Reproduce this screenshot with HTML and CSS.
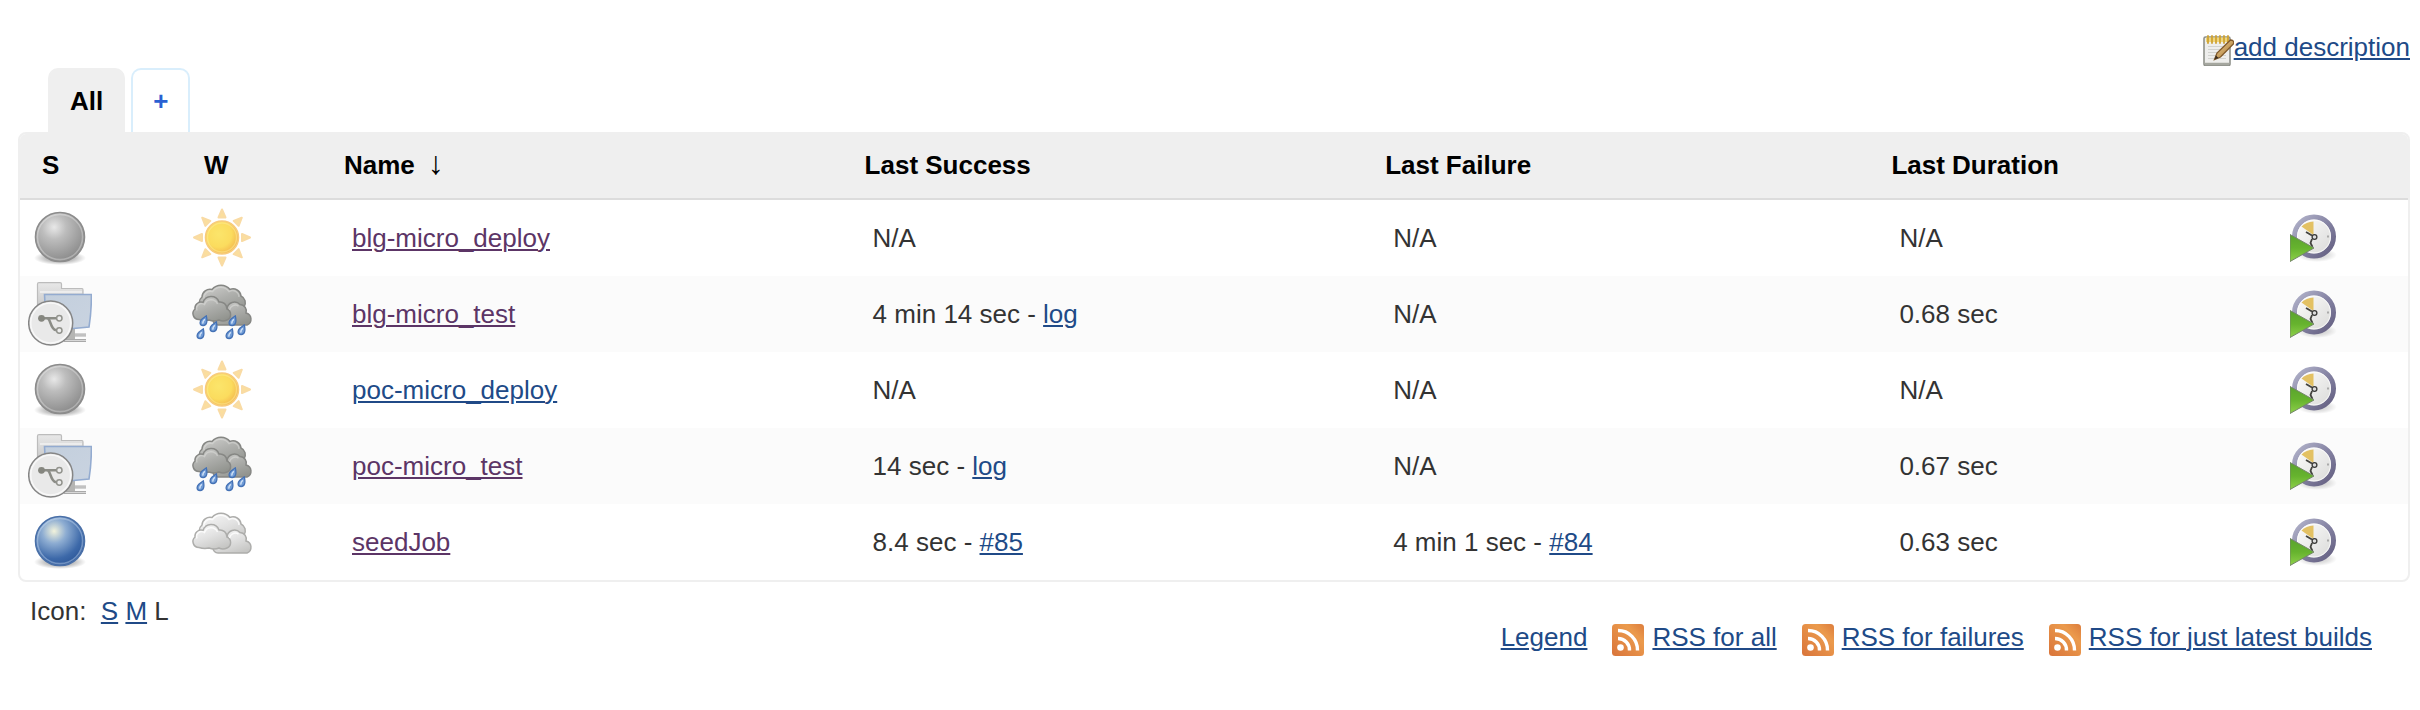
FILE: index.html
```html
<!DOCTYPE html>
<html lang="en">
<head>
<meta charset="utf-8">
<title>Dashboard</title>
<link rel="stylesheet" href="styles.css">
</head>
<body>
<svg class="sprite" aria-hidden="true">
  <defs>
    <radialGradient id="g-grey" cx=".38" cy=".3" r=".7"><stop offset="0" stop-color="#e8e8e8"/><stop offset=".35" stop-color="#bdbdbd"/><stop offset="1" stop-color="#8c8c8c"/></radialGradient>
    <radialGradient id="g-blue" cx=".38" cy=".3" r=".7"><stop offset="0" stop-color="#f2f3dc"/><stop offset=".35" stop-color="#8eadd2"/><stop offset=".8" stop-color="#3d69a9"/><stop offset="1" stop-color="#2f5a9c"/></radialGradient>
    <radialGradient id="g-shadow"><stop offset="0" stop-color="#000" stop-opacity=".45"/><stop offset=".6" stop-color="#000" stop-opacity=".22"/><stop offset="1" stop-color="#000" stop-opacity="0"/></radialGradient>
    <radialGradient id="g-sun" cx=".4" cy=".4" r=".65"><stop offset="0" stop-color="#fbe56b"/><stop offset=".6" stop-color="#fbdc5e"/><stop offset="1" stop-color="#f3b44c"/></radialGradient>
    <linearGradient id="g-storm" x1=".1" y1="0" x2=".7" y2="1"><stop offset="0" stop-color="#cfcfcd"/><stop offset=".5" stop-color="#adaeab"/><stop offset="1" stop-color="#92948f"/></linearGradient>
    <linearGradient id="g-cloud" x1=".1" y1="0" x2=".7" y2="1"><stop offset="0" stop-color="#f8f8f8"/><stop offset=".5" stop-color="#e2e2e2"/><stop offset="1" stop-color="#c6c6c4"/></linearGradient>
    <linearGradient id="g-folder" x1="0" y1="0" x2="0" y2="1"><stop offset="0" stop-color="#e8e8e8"/><stop offset="1" stop-color="#b4b4b4"/></linearGradient>
    <linearGradient id="g-front" x1="0" y1="0" x2="1" y2="1"><stop offset="0" stop-color="#c3cfdd"/><stop offset="1" stop-color="#c9d3e0"/></linearGradient>
    <linearGradient id="g-ring" x1="0" y1="0" x2="1" y2="1"><stop offset="0" stop-color="#b4b5cc"/><stop offset=".5" stop-color="#8583a3"/><stop offset="1" stop-color="#625d7f"/></linearGradient>
    <linearGradient id="g-play" x1="0" y1="0" x2="0" y2="1"><stop offset="0" stop-color="#5aa22e"/><stop offset=".5" stop-color="#66b32e"/><stop offset="1" stop-color="#8ed04a"/></linearGradient>
    <linearGradient id="g-rss" x1="0" y1="1" x2="1" y2="0"><stop offset="0" stop-color="#d9743a"/><stop offset=".7" stop-color="#eb9a4c"/><stop offset="1" stop-color="#dc7c3c"/></linearGradient>
    <linearGradient id="g-face" x1="0" y1="0" x2="1" y2="1"><stop offset="0" stop-color="#fff"/><stop offset="1" stop-color="#d8d8d6"/></linearGradient>
    <linearGradient id="g-pencil" x1="0" y1="0" x2="1" y2="1"><stop offset="0" stop-color="#edcf96"/><stop offset="1" stop-color="#a8762f"/></linearGradient>
  </defs>

  <symbol id="ball-grey" viewBox="0 0 64 64">
    <ellipse cx="32" cy="52" rx="26" ry="7" fill="url(#g-shadow)"/>
    <circle cx="32" cy="31" r="24.5" fill="url(#g-grey)" stroke="#8c8c8c" stroke-width="1.6"/>
    <circle cx="32" cy="31" r="22.6" fill="none" stroke="#fff" stroke-opacity=".3" stroke-width="1.6"/>
  </symbol>
  <symbol id="ball-blue" viewBox="0 0 64 64">
    <ellipse cx="32" cy="52" rx="26" ry="7" fill="url(#g-shadow)"/>
    <circle cx="32" cy="31" r="24.5" fill="url(#g-blue)" stroke="#4a70a8" stroke-width="1.6"/>
    <circle cx="32" cy="31" r="22.6" fill="none" stroke="#cfe0f5" stroke-opacity=".4" stroke-width="1.6"/>
  </symbol>

  <symbol id="sunny" viewBox="0 0 64 64">
    <g fill="#fbdf9c" stroke="#f9dba4" stroke-width="2" stroke-linejoin="round">
      <path id="ray" d="M28.500 11.500 32 3.500l3.500 8Z"/>
      <use href="#ray" transform="rotate(45 32 31.500)"/>
      <use href="#ray" transform="rotate(90 32 31.500)"/>
      <use href="#ray" transform="rotate(135 32 31.500)"/>
      <use href="#ray" transform="rotate(180 32 31.500)"/>
      <use href="#ray" transform="rotate(225 32 31.500)"/>
      <use href="#ray" transform="rotate(270 32 31.500)"/>
      <use href="#ray" transform="rotate(315 32 31.500)"/>
    </g>
    <circle cx="32" cy="31.500" r="16.500" fill="url(#g-sun)" stroke="#f7cb7c" stroke-width="1.600"/>
    <circle cx="32" cy="31.500" r="14.500" fill="none" stroke="#fdeb98" stroke-opacity=".5" stroke-width="1.400"/>
  </symbol>

  <symbol id="cloud-shapes" viewBox="0 0 64 64">
    <path d="M12 26A7 7 0 0 1 12 15 8 8 0 0 1 22 7.500 11.500 11.500 0 0 1 40 7.500 8 8 0 0 1 51 14 7.500 7.500 0 0 1 54 25L50 34H16Z"/>
    <path d="M28 43A5 5 0 0 1 28 33 6 6 0 0 1 37 27 7.500 7.500 0 0 1 50 22.500 6.500 6.500 0 0 1 56 31 6.300 6.300 0 0 1 57 43Z"/>
    <path d="M9 37.500A6 6 0 0 1 5 27 6 6 0 0 1 13 20.500 8.500 8.500 0 0 1 29 20 7 7 0 0 1 37 27 6 6 0 0 1 37 38Q33 40 29 38 24 40 19 38 14 39 9 37.500Z"/>
  </symbol>
  <symbol id="cloud-lights" viewBox="0 0 64 64">
    <path d="M14 16.500A6.500 6.500 0 0 1 22.500 9.500 10 10 0 0 1 39 9.500 6.500 6.500 0 0 1 49 15M7 28.500A5 5 0 0 1 14.500 22.500 7 7 0 0 1 27.500 22M39.500 28A6 6 0 0 1 48.500 24"/>
  </symbol>
  <symbol id="cloudy" viewBox="0 0 64 64">
    <g fill="url(#g-cloud)" stroke="#adadab" stroke-width="1.500"><use href="#cloud-shapes" width="64" height="64"/></g>
    <g fill="none" stroke="#fff" stroke-opacity=".8" stroke-width="1.500"><use href="#cloud-lights" width="64" height="64"/></g>
  </symbol>
  <symbol id="drop" viewBox="0 0 10 14">
    <path d="M8.300 1C9.500 6 9.500 12.500 4.500 12.500 0 12.500 .300 7.500 3 5Z" fill="#6f9bd6" stroke="#4471b5" stroke-width="1.500"/>
    <path d="M6.500 5C5 6.500 3.500 8 4.500 10" fill="none" stroke="#d3e3f7" stroke-width="1.600"/>
  </symbol>
  <symbol id="rainy" viewBox="0 0 64 64">
    <g fill="url(#g-storm)" stroke="#868784" stroke-width="1.500"><use href="#cloud-shapes" width="64" height="64"/></g>
    <g fill="none" stroke="#e8e8e6" stroke-opacity=".4" stroke-width="1.500"><use href="#cloud-lights" width="64" height="64"/></g>
    <use href="#drop" x="9" y="33" width="9" height="12"/>
    <use href="#drop" x="19" y="39" width="9" height="12"/>
    <use href="#drop" x="6" y="46" width="9" height="12"/>
    <use href="#drop" x="38" y="33" width="9" height="12"/>
    <use href="#drop" x="47" y="42" width="9" height="12"/>
    <use href="#drop" x="35" y="46" width="9" height="12"/>
  </symbol>

  <symbol id="pipeline" viewBox="0 0 64 64">
    <path d="M36 53H58M36 58.500H58" stroke="#a9a9a9" stroke-width="3"/>
    <path d="M36 53H58M36 58.500H58" stroke="#d8d8d8" stroke-width="1"/>
    <path d="M39 46h8v11h-8z" fill="#b5b5b3"/>
    <path d="M9.500 42V2Q9.500 .700 11 .700H32Q33.500 .700 33.500 2V6.500H54Q55 6.500 55 8V42Z" fill="url(#g-folder)" stroke="#bcbcbc" stroke-width="1.200"/>
    <path d="M12 10H54" stroke="#f2f2f2" stroke-width="1.500"/>
    <path d="M16.500 12.500H63.400C63.400 24 62.500 36 61 45L40 47 18 40Z" fill="url(#g-front)" stroke="#93abd0" stroke-width="1.600"/>
    <circle cx="22.700" cy="41" r="22" fill="#e9e9e9" stroke="#858585" stroke-width="1.500"/>
    <circle cx="22.700" cy="41" r="20" fill="none" stroke="#f8f8f8" stroke-width="1.500"/>
    <path d="M14 36.300H28M19 36.300C23 36.300 22 47 28 48.300" fill="none" stroke="#8b8c86" stroke-width="2.600"/>
    <circle cx="13.500" cy="36.300" r="3.400" fill="#85867f"/>
    <circle cx="31.300" cy="36.300" r="2.700" fill="#eee" stroke="#92938d" stroke-width="1.500"/>
    <circle cx="31.300" cy="48.500" r="2.700" fill="#eee" stroke="#92938d" stroke-width="1.500"/>
  </symbol>

  <symbol id="clock" viewBox="0 0 48 48">
    <ellipse cx="27" cy="41" rx="20" ry="7" fill="url(#g-shadow)" opacity=".5"/>
    <circle cx="24" cy="22.500" r="19.500" fill="url(#g-face)" stroke="url(#g-ring)" stroke-width="5"/>
    <circle cx="24" cy="22.500" r="16.500" fill="none" stroke="#fff" stroke-opacity=".8" stroke-width="1"/>
    <path d="M11.500 12.500Q16 8 23.500 7.500V21Z" fill="#e3c163"/>
    <path d="M16 18 22 21.500M22 25 20.500 29 22.500 33" fill="none" stroke="#44443f" stroke-width="1.800"/>
    <circle cx="24.500" cy="23" r="2.400" fill="#ddd" stroke="#3a3a38" stroke-width="1.300"/>
    <path d="M37 22.500H39" stroke="#aaa" stroke-width="2"/>
    <path d="M0 20.500 24 34 0 47.500Z" fill="url(#g-play)" stroke="#74866a" stroke-width="1"/>
  </symbol>

  <symbol id="notepad" viewBox="0 0 32 32">
    <rect x="2" y="3" width="26" height="28.500" rx="1.500" fill="#eeeeec" stroke="#8f918a" stroke-width="1.600"/>
    <path d="M3 30H27" stroke="#a5a79f" stroke-width="2.500"/>
    <path d="M6 12.500H24M6 15.500H24M6 18.500H24M6 21.500H24M6 24.500H24" stroke="#d2d3cf" stroke-width="1"/>
    <path d="M4 3.500H27V8H4Z" fill="#efd67c"/>
    <path d="M6 2V9M10 2V9M14 2V9M18 2V9M22 2V9M26 2V9" stroke="#cfa332" stroke-width="1.800" stroke-linecap="round"/>
    <path d="M12.500 25.500 15 19 28.500 6Q32 6 31.800 9.500L18.500 23Z" fill="url(#g-pencil)" stroke="#80592a" stroke-width="1.300"/>
    <path d="M12.500 25.500 14 21.500 16.500 24Z" fill="#3b2e20"/>
  </symbol>

  <symbol id="rss" viewBox="0 0 32 32">
    <rect width="32" height="32" rx="3.500" fill="url(#g-rss)"/>
    <circle cx="8.500" cy="23.500" r="3.300" fill="#fff"/>
    <path d="M6 14.500A11.500 11.500 0 0 1 17.500 26.500M6 6.500A19.500 19.500 0 0 1 25.500 26.500" fill="none" stroke="#fff" stroke-width="3.400"/>
  </symbol>
</svg>

<main class="panel">
  <div class="description">
    <a class="description-link" href="#description"><svg class="icon-sm"><use href="#notepad"/></svg>add description</a>
  </div>

  <nav class="tabs" aria-label="Views">
    <a class="tab tab-active" href="#all">All</a>
    <a class="tab tab-new" href="#new" title="New view">+</a>
  </nav>

  <div class="table-frame">
    <table class="jobs">
      <colgroup><col class="col-status"><col class="col-weather"><col class="col-wide"><col class="col-wide"><col class="col-failure"><col><col class="col-action"></colgroup>
      <thead>
        <tr><th>S</th><th>W</th><th>Name <span class="sort">↓</span></th><th>Last Success</th><th>Last Failure</th><th>Last Duration</th><th></th></tr>
      </thead>
      <tbody>
        <tr>
          <td class="icon-cell"><svg class="icon-lg"><use href="#ball-grey"/></svg></td>
          <td class="icon-cell"><svg class="icon-lg"><use href="#sunny"/></svg></td>
          <td><a class="visited" href="#blg-deploy">blg-micro_deploy</a></td>
          <td>N/A</td><td>N/A</td><td>N/A</td>
          <td><a href="#build1" aria-label="Schedule a build"><svg class="icon-md"><use href="#clock"/></svg></a></td>
        </tr>
        <tr>
          <td class="icon-cell"><svg class="icon-lg"><use href="#pipeline"/></svg></td>
          <td class="icon-cell"><svg class="icon-lg"><use href="#rainy"/></svg></td>
          <td><a class="visited" href="#blg-test">blg-micro_test</a></td>
          <td>4 min 14 sec - <a href="#log1">log</a></td><td>N/A</td><td>0.68 sec</td>
          <td><a href="#build2" aria-label="Schedule a build"><svg class="icon-md"><use href="#clock"/></svg></a></td>
        </tr>
        <tr>
          <td class="icon-cell"><svg class="icon-lg"><use href="#ball-grey"/></svg></td>
          <td class="icon-cell"><svg class="icon-lg"><use href="#sunny"/></svg></td>
          <td><a href="#poc-deploy">poc-micro_deploy</a></td>
          <td>N/A</td><td>N/A</td><td>N/A</td>
          <td><a href="#build3" aria-label="Schedule a build"><svg class="icon-md"><use href="#clock"/></svg></a></td>
        </tr>
        <tr>
          <td class="icon-cell"><svg class="icon-lg"><use href="#pipeline"/></svg></td>
          <td class="icon-cell"><svg class="icon-lg"><use href="#rainy"/></svg></td>
          <td><a class="visited" href="#poc-test">poc-micro_test</a></td>
          <td>14 sec - <a href="#log2">log</a></td><td>N/A</td><td>0.67 sec</td>
          <td><a href="#build4" aria-label="Schedule a build"><svg class="icon-md"><use href="#clock"/></svg></a></td>
        </tr>
        <tr>
          <td class="icon-cell"><svg class="icon-lg"><use href="#ball-blue"/></svg></td>
          <td class="icon-cell"><svg class="icon-lg"><use href="#cloudy"/></svg></td>
          <td><a class="visited" href="#seed">seedJob</a></td>
          <td>8.4 sec - <a href="#b85">#85</a></td><td>4 min 1 sec - <a href="#b84">#84</a></td><td>0.63 sec</td>
          <td><a href="#build5" aria-label="Schedule a build"><svg class="icon-md"><use href="#clock"/></svg></a></td>
        </tr>
      </tbody>
    </table>
  </div>

  <footer class="footer">
    <div class="sizes">Icon:&nbsp; <a href="#small">S</a> <a href="#medium">M</a> L</div>
    <div class="feeds">
      <a href="#legend">Legend</a>
      <span class="feed"><svg class="icon-sm"><use href="#rss"/></svg><a href="#rss-all">RSS for all</a></span>
      <span class="feed"><svg class="icon-sm"><use href="#rss"/></svg><a href="#rss-failures">RSS for failures</a></span>
      <span class="feed"><svg class="icon-sm"><use href="#rss"/></svg><a href="#rss-latest">RSS for just latest builds</a></span>
    </div>
  </footer>
</main>
</body>
</html>
```

FILE: styles.css
```css
body {
  margin: 0;
  background: #fff;
  color: #333;
  font: 26px/30px "Liberation Sans", Helvetica, Arial, sans-serif;
}

a {
  color: #204a87;
  text-decoration-thickness: 2px;
  text-underline-offset: 2px;
}

.visited { color: #5c3566; }

svg {
  display: block;
  flex: none;
}

.sprite {
  position: absolute;
  width: 0;
  height: 0;
}

.icon-sm { width: 32px; height: 32px; }
.icon-md { width: 48px; height: 48px; }
.icon-lg { width: 64px; height: 64px; }

.panel { padding: 32px 10px 32px 18px; }

.description {
  display: flex;
  justify-content: flex-end;
  height: 36px;
}

.description-link {
  display: flex;
  align-items: flex-start;
}

.description-link .icon-sm { margin-top: 2px; }

.tabs {
  display: flex;
  gap: 6px;
  padding-left: 30px;
}

.tab {
  padding: 16px 20px;
  border: 2px solid #d9eefc;
  border-bottom: 0;
  border-radius: 10px 10px 0 0;
  font-weight: bold;
  line-height: 30px;
  text-decoration: none;
}

.tab-active {
  border-color: #efefef;
  background: #efefef;
  color: #000;
}

.tab-new { color: #2a60d2; }

.table-frame {
  overflow: hidden;
  border: 2px solid #efefef;
  border-radius: 8px;
}

.jobs {
  width: 100%;
  table-layout: fixed;
  border-collapse: separate;
  border-spacing: 0;
}

.col-status { width: 162px; }
.col-weather { width: 140px; }
.col-wide { width: 21.8%; }
.col-failure { width: 21.2%; }
.col-action { width: 148px; }

.jobs th {
  padding: 16px 22px 18px;
  border-bottom: 2px solid #dcdcdc;
  background: #efefef;
  color: #000;
  text-align: left;
}

.sort {
  padding-left: 6px;
  font-family: "Liberation Serif", serif;
  font-size: 32px;
  font-weight: normal;
  line-height: 0;
}

.jobs td {
  padding: 6px 8px 6px 30px;
  vertical-align: middle;
}

.jobs .icon-cell { padding-left: 8px; }

.jobs tbody tr:nth-child(even) { background: #fbfbfb; }

.footer {
  display: flex;
  justify-content: space-between;
  align-items: flex-start;
  padding: 14px 38px 0 12px;
}

.feeds {
  display: flex;
  gap: 25px;
  padding-top: 26px;
}

.feed {
  display: flex;
  gap: 8px;
}

.feed .icon-sm { margin-top: 2px; }
```
